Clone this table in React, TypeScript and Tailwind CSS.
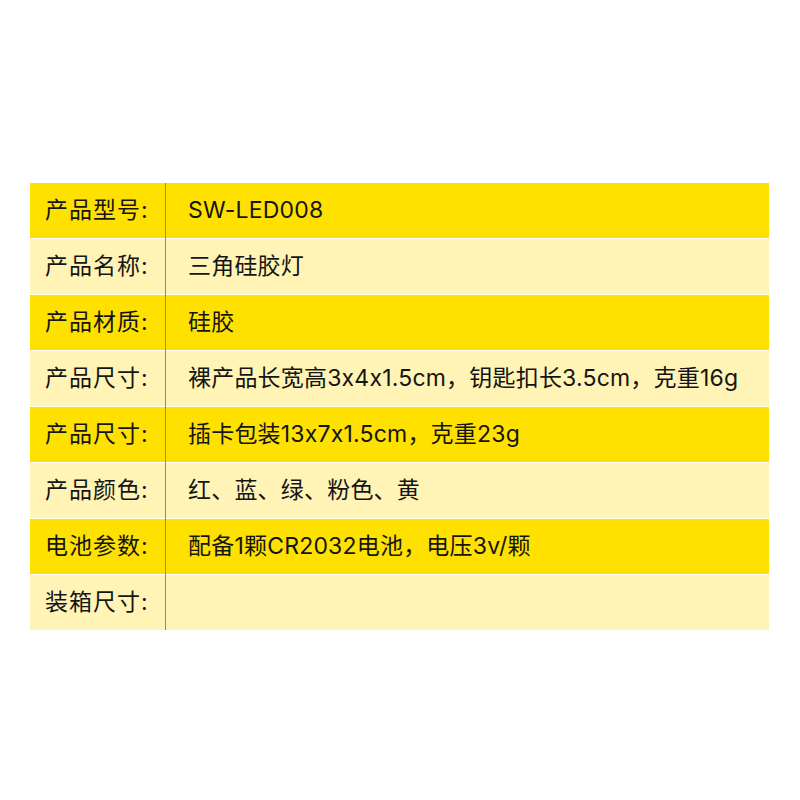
import React from 'react'

const rows = [
  { label: '产品型号:', value: 'SW-LED008' },
  { label: '产品名称:', value: '三角硅胶灯' },
  { label: '产品材质:', value: '硅胶' },
  { label: '产品尺寸:', value: '裸产品长宽高3x4x1.5cm，钥匙扣长3.5cm，克重16g' },
  { label: '产品尺寸:', value: '插卡包装13x7x1.5cm，克重23g' },
  { label: '产品颜色:', value: '红、蓝、绿、粉色、黄' },
  { label: '电池参数:', value: '配备1颗CR2032电池，电压3v/颗' },
  { label: '装箱尺寸:', value: '' },
]

export default function App() {
  return (
    <div className="min-h-[800px] w-[800px] bg-white pt-[183px] pl-[30px] font-['Inter','Noto_Sans_CJK_SC',sans-serif] [font-feature-settings:'calt'_0]">
      <div className='flex w-[739px] text-[23px] text-[#151515]'>
        <div className='flex w-[136px] flex-col gap-px border-r border-[#978b68] bg-white'>
          {rows.map((r, i) => (
            <div
              key={i}
              className={`flex h-[55px] items-center pl-[15px] tracking-[1px] ${i % 2 === 0 ? 'bg-[#ffe100]' : 'bg-[#fff4b6]'}`}
            >
              {r.label}
            </div>
          ))}
        </div>
        <div className='flex flex-1 flex-col gap-px bg-white'>
          {rows.map((r, i) => (
            <div
              key={i}
              className={`flex h-[55px] items-center pl-[22px] tracking-[0.2px] whitespace-nowrap ${i % 2 === 0 ? 'bg-[#ffe100]' : 'bg-[#fff4b6]'}`}
            >
              {r.value}
            </div>
          ))}
        </div>
      </div>
    </div>
  )
}
